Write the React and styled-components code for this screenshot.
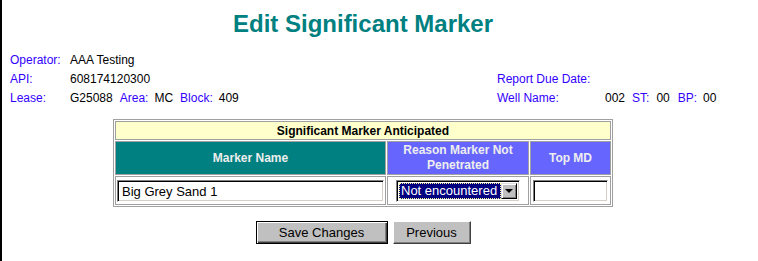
import React from 'react'
import styled, { createGlobalStyle } from 'styled-components'

const GlobalStyle = createGlobalStyle`
  html, body {
    margin: 0;
    padding: 0;
    background: #fff;
  }
  body {
    font-family: 'Liberation Sans', Arial, sans-serif;
    color: #000;
  }
`

const Frame = styled.div`
  border-left: 2px solid #000;
  min-height: 261px;
  box-sizing: border-box;
`

const Page = styled.div`
  width: 722px;
  padding-top: 10px;
`

const Title = styled.h1`
  margin: 0;
  text-align: center;
  font-size: 24px;
  line-height: 28px;
  font-weight: bold;
  color: #008080;
`

const Info = styled.div`
  margin-top: 13px;
  padding-left: 8px;
  font-size: 12px;
`

const InfoRow = styled.div`
  display: flex;
  height: 19px;
  line-height: 19px;
  white-space: nowrap;
`

const Side = styled.div`
  display: flex;
  width: ${({ $width }) => $width || 'auto'};
`

const Label = styled.span`
  color: #3300ff;
  width: ${({ $width }) => $width || 'auto'};
  margin-right: ${({ $gap }) => ($gap ? `${$gap}px` : '0')};
`

const Value = styled.span`
  margin-right: ${({ $gap }) => ($gap ? `${$gap}px` : '0')};
`

const Grid = styled.table`
  margin: 11px auto 0;
  width: 500px;
  border: 1px solid #a0a0a0;
  border-collapse: separate;
  border-spacing: 1px;
  table-layout: fixed;
`

const Col = styled.col`
  width: ${({ $width }) => $width}px;
`

const Cell = styled.td`
  border: 1px solid #a0a0a0;
  padding: 0;
  text-align: center;
  vertical-align: middle;
`

const CaptionCell = styled(Cell)`
  background: #ffffcc;
  height: 17px;
  font-size: 12px;
  font-weight: bold;
`

const HeadCell = styled(Cell)`
  background: ${({ $bg }) => $bg};
  color: #eeeeee;
  height: 32px;
  font-size: 12px;
  line-height: 15px;
  font-weight: bold;
`

const DataCell = styled(Cell)`
  height: 26px;
  padding: 1px 1px 0;
`

const sunken = `
  border-top: 1px solid #808080;
  border-left: 1px solid #808080;
  border-bottom: 1px solid #ffffff;
  border-right: 1px solid #ffffff;
  box-shadow: inset 1px 1px 0 #000, inset -1px -1px 0 #d4d0c8;
`

const TextBox = styled.div`
  ${sunken}
  box-sizing: border-box;
  width: ${({ $width }) => $width}px;
  height: 22px;
  margin: 0 auto;
  padding: 2px 4px 0;
  background: #fff;
  font-size: 13px;
  line-height: 17px;
  text-align: left;
`

const Select = styled.div`
  ${sunken}
  box-sizing: border-box;
  width: 124px;
  height: 22px;
  margin: 0 auto;
  padding: 2px;
  display: flex;
  background: #fff;
`

const Selected = styled.div`
  flex: 1;
  background: #000080;
  border: 1px dotted #ffff99;
  color: #fff;
  font-size: 13px;
  line-height: 14px;
  text-align: left;
  padding-left: 1px;
  white-space: nowrap;
  overflow: hidden;
`

const ArrowButton = styled.div`
  width: 16px;
  box-sizing: border-box;
  background: #c0c0c0;
  border-top: 1px solid #dfdfdf;
  border-left: 1px solid #dfdfdf;
  border-right: 1px solid #000;
  border-bottom: 1px solid #000;
  box-shadow: inset 1px 1px 0 #fff, inset -1px -1px 0 #808080;
  display: flex;
  align-items: center;
  justify-content: center;

  &::after {
    content: '';
    border-left: 4px solid transparent;
    border-right: 4px solid transparent;
    border-top: 4px solid #000;
  }
`

const Actions = styled.div`
  margin-top: 14px;
  display: flex;
  justify-content: center;
  gap: 5px;
`

const Button = styled.button`
  box-sizing: border-box;
  width: ${({ $width }) => $width}px;
  height: 23px;
  padding: 0;
  background: #c0c0c0;
  font-family: 'Liberation Sans', Arial, sans-serif;
  font-size: 13px;
  color: #000;
  border: 1px solid;
  border-color: ${({ $default }) => ($default ? '#000' : '#fff #404040 #404040 #fff')};
  box-shadow: ${({ $default }) =>
    $default
      ? 'inset 1px 1px 0 #fff, inset -1px -1px 0 #404040, inset -2px -2px 0 #808080'
      : 'inset -1px -1px 0 #808080'};
`

const columns = [
  { label: 'Marker Name', bg: '#008080', width: 271 },
  { label: 'Reason Marker Not Penetrated', bg: '#6666ff', width: 142 },
  { label: 'Top MD', bg: '#6666ff', width: 81 },
]

export default function App() {
  return (
    <Frame>
      <GlobalStyle />
      <Page>
        <Title>Edit Significant Marker</Title>
        <Info>
          <InfoRow>
            <Side $width="487px">
              <Label $width="60px">Operator:</Label>
              <Value>AAA Testing</Value>
            </Side>
          </InfoRow>
          <InfoRow>
            <Side $width="487px">
              <Label $width="60px">API:</Label>
              <Value>608174120300</Value>
            </Side>
            <Side>
              <Label>Report Due Date:</Label>
            </Side>
          </InfoRow>
          <InfoRow>
            <Side $width="487px">
              <Label $width="60px">Lease:</Label>
              <Value $gap={7}>G25088</Value>
              <Label $gap={6}>Area:</Label>
              <Value $gap={7}>MC</Value>
              <Label $gap={6}>Block:</Label>
              <Value>409</Value>
            </Side>
            <Side>
              <Label $width="108px">Well Name:</Label>
              <Value $gap={7}>002</Value>
              <Label $gap={7}>ST:</Label>
              <Value $gap={8}>00</Value>
              <Label $gap={6}>BP:</Label>
              <Value>00</Value>
            </Side>
          </InfoRow>
        </Info>

        <Grid>
          <colgroup>
            {columns.map(({ label, width }) => (
              <Col key={label} $width={width} />
            ))}
          </colgroup>
          <tbody>
            <tr>
              <CaptionCell colSpan={3}>Significant Marker Anticipated</CaptionCell>
            </tr>
            <tr>
              {columns.map(({ label, bg }) => (
                <HeadCell key={label} $bg={bg}>
                  {label}
                </HeadCell>
              ))}
            </tr>
            <tr>
              <DataCell>
                <TextBox $width={267}>Big Grey Sand 1</TextBox>
              </DataCell>
              <DataCell>
                <Select>
                  <Selected>Not encountered</Selected>
                  <ArrowButton />
                </Select>
              </DataCell>
              <DataCell>
                <TextBox $width={75} />
              </DataCell>
            </tr>
          </tbody>
        </Grid>

        <Actions>
          <Button $default $width={132}>Save Changes</Button>
          <Button $width={78}>Previous</Button>
        </Actions>
      </Page>
    </Frame>
  )
}
